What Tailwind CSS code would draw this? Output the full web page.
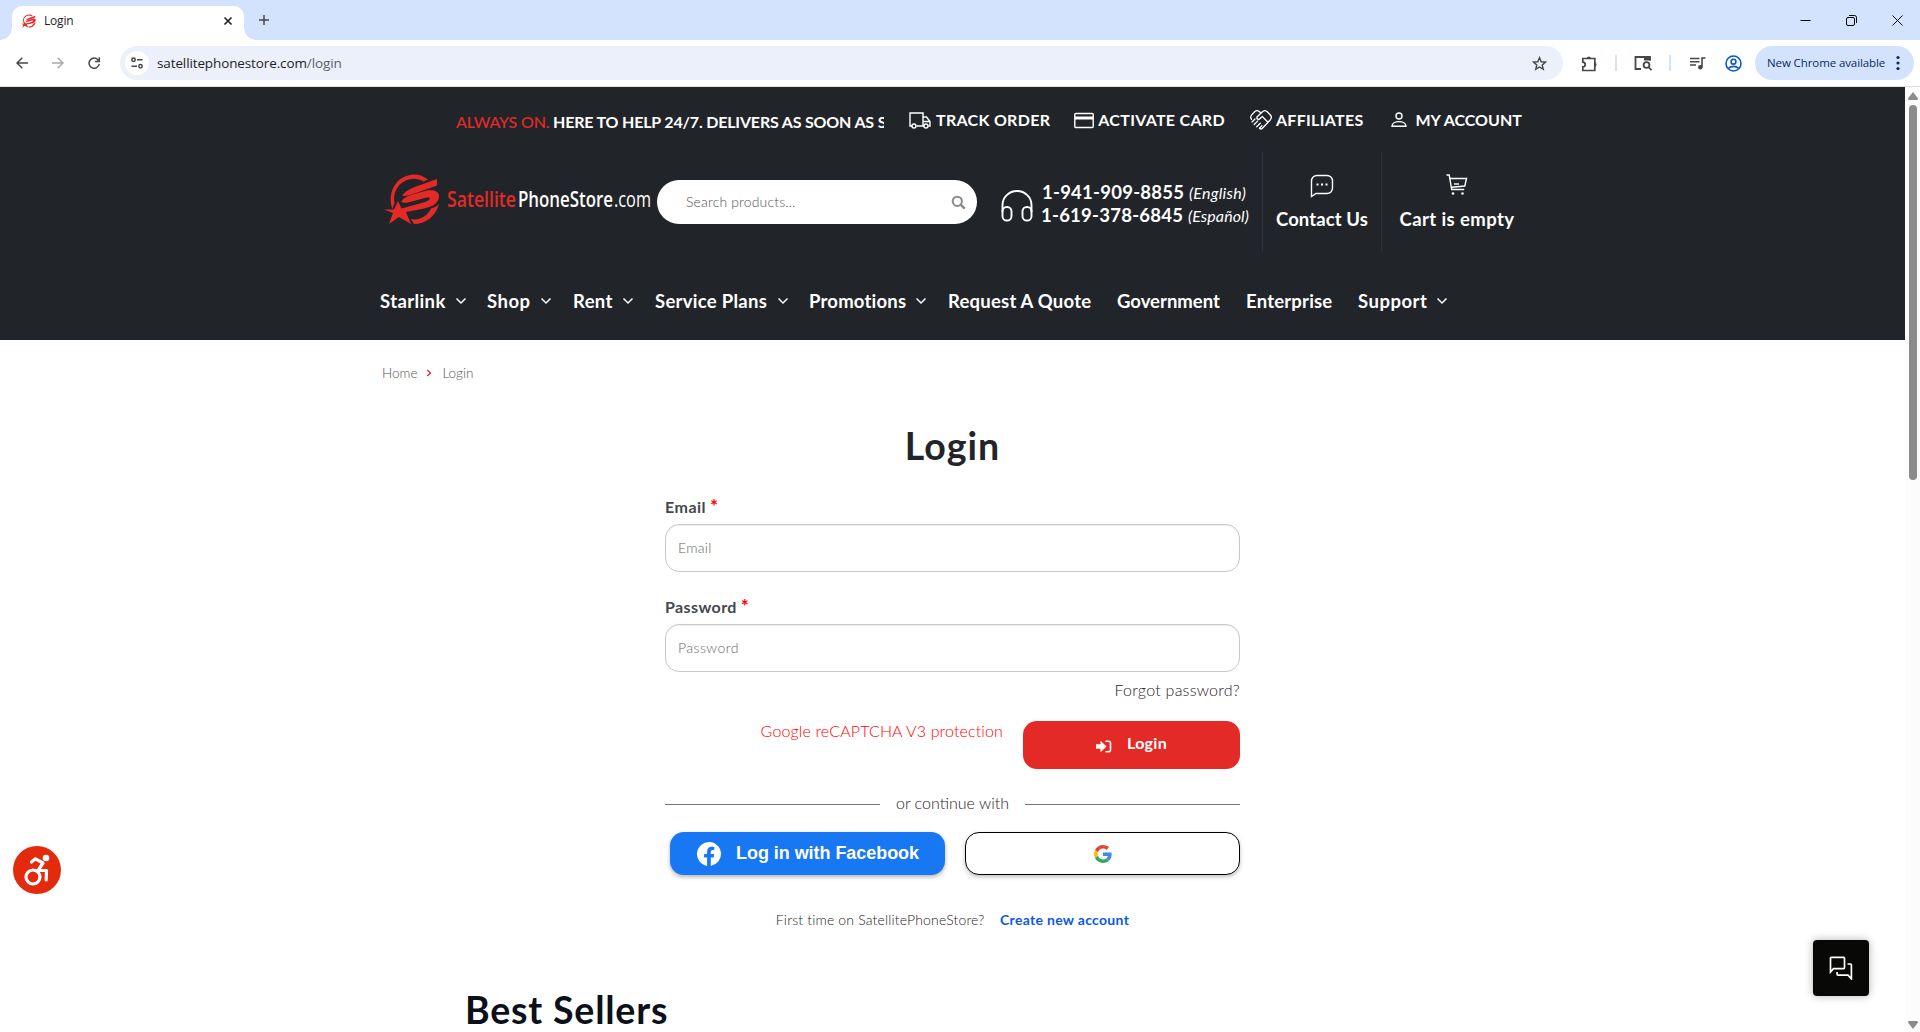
<!DOCTYPE html>
<html lang="en">
<head>
  <meta charset="UTF-8" />
  <meta name="viewport" content="width=device-width, initial-scale=1.0" />
  <title>Login</title>
  <script src="https://cdn.jsdelivr.net/npm/@tailwindcss/browser@4"></script>
</head>
<body class="w-[1920px] h-[1032px] overflow-hidden flex flex-col bg-white font-['Lato','Open_Sans',sans-serif]">

<!-- Shared symbols -->
<svg class="hidden">
  <symbol id="mark" viewBox="0 0 56 50">
    <path d="M8.500 35C4 24 8 10 18 4c9-5.500 19-4.500 26 1.500l-4.500 2C33 3.500 26 4 20 7.500 12 12 9 21 10.500 29z" />
    <path d="M18 22c3-5 9-7.500 14-9.500L53 5v6.500L32 19c-5 1.700-9 3.500-14 3z" />
    <path d="M17 28c3-5 8-6.500 13-8l13-3.500c6-1.200 12 .5 12 5.500 0 8-8 11-15 12.500L22 38l5 12-12-7-10 7 4-11-9-3.500h10L14 27l3.500 7.500 22-6c3-.9 6-2.300 6.500-4-.8-1.600-4-.8-7 0l-14 3.700c-3 .7-5 1-8-.2z" />
    <path d="M55 30c-3 12-13 20-25 20l-3-5c8 1.800 16-2.500 20-10.500 2.500-.8 5.500-2 8-4.500z" />
  </symbol>
  <symbol id="chev" viewBox="0 0 12 8"><path d="M1.500 1.500 6 6l4.500-4.500" fill="none" stroke="#fff" stroke-width="1.500" /></symbol>
</svg>

<!-- Tab strip -->
<div class="h-10 shrink-0 bg-[#d3e3fd] flex items-end font-['Open_Sans','Noto_Sans',sans-serif]">
  <div class="relative ml-3 w-[232px] h-[34px] bg-white rounded-t-[10px] flex items-center pl-[9px] pb-[4px]">
    <div class="absolute -left-3 bottom-0 w-3 h-3 bg-[radial-gradient(circle_at_0_0,#d3e3fd_11.5px,#fff_12px)]"></div>
    <div class="absolute -right-3 bottom-0 w-3 h-3 bg-[radial-gradient(circle_at_100%_0,#d3e3fd_11.5px,#fff_12px)]"></div>
    <svg class="w-[15px] h-[14px] fill-[#e42a27]"><use href="#mark" /></svg>
    <span class="ml-2 text-[12px] tracking-[-0.2px] text-[#1f1f1f]">Login</span>
    <svg class="ml-auto mr-[11px] w-[10px] h-[10px]" viewBox="0 0 10 10"><path d="M1.500 1.500l7 7m0-7l-7 7" stroke="#1f1f1f" stroke-width="1.600" /></svg>
  </div>
  <svg class="ml-[14px] mb-[14px] w-3 h-3" viewBox="0 0 12 12"><path d="M6 1v10M1 6h10" stroke="#474747" stroke-width="1.500" /></svg>
  <div class="ml-auto mr-[17px] mb-[14px] flex items-center gap-[35px]">
    <svg class="w-[11px] h-[11px]" viewBox="0 0 11 11"><path d="M.5 5.500h10" stroke="#000" /></svg>
    <svg class="w-[11px] h-[11px]" viewBox="0 0 11 11" fill="none" stroke="#000"><rect x=".5" y="2.500" width="8" height="8" rx="1.500" /><path d="M3 .5h5.500a2 2 0 0 1 2 2V8" /></svg>
    <svg class="w-[11px] h-[11px]" viewBox="0 0 11 11"><path d="M.5.5l10 10m0-10l-10 10" stroke="#000" /></svg>
  </div>
</div>

<!-- Toolbar -->
<div class="h-[47px] shrink-0 border-b border-[#dcdfe5] flex items-center font-['Open_Sans','Noto_Sans',sans-serif]">
  <svg class="ml-4 w-3 h-3" viewBox="0 0 12 12" fill="none" stroke="#474747" stroke-width="1.500"><path d="M12 6H1M6.300.8 1 6l5.300 5.200" /></svg>
  <svg class="ml-6 w-3 h-3" viewBox="0 0 12 12" fill="none" stroke="#a9a9a9" stroke-width="1.500"><path d="M0 6h11M5.700.8 11 6l-5.300 5.200" /></svg>
  <svg class="ml-6 w-3 h-3" viewBox="0 0 12 12" fill="none" stroke="#474747" stroke-width="1.500"><path d="M10.300 3.200A5.100 5.100 0 1 0 11.200 7M11.300.3v4.200H7.100" /></svg>
  <div class="ml-5 w-[1443px] h-[34px] rounded-full bg-[#ecf0fa] flex items-center pl-[5px] pr-4">
    <div class="w-6 h-6 rounded-full bg-white flex items-center justify-center">
      <svg class="w-3 h-3" viewBox="0 0 12 12" fill="none" stroke="#474747" stroke-width="1.500"><circle cx="2.500" cy="2.700" r="1.700" /><path d="M6 2.700h5.500M.5 9.300H6" /><circle cx="9.500" cy="9.300" r="1.700" /></svg>
    </div>
    <p class="ml-2 text-[13.5px] tracking-[-0.12px] text-[#1f1f1f]">satellitephonestore.com<span class="text-[#5b6068]">/login</span></p>
    <svg class="ml-auto w-[15px] h-[15px]" viewBox="0 0 16 16" fill="none" stroke="#474747" stroke-width="1.500"><path d="M8 1.800l1.800 4.300 4.600.4-3.500 3 1.100 4.600L8 11.700l-4 2.400 1.100-4.600-3.500-3 4.600-.4z" /></svg>
  </div>
  <svg class="ml-[18px] w-[17px] h-[17px]" viewBox="0 0 17 17" fill="none" stroke="#474747" stroke-width="1.700"><path d="M1.800 3.500h12v12h-12v-3.600a2.400 2.400 0 0 0 0-4.800z" /><path d="M6 3.200a2 2 0 0 1 3.600 0zM14 7.700a2 2 0 0 1 0 3.600z" fill="#474747" stroke-width="1" /></svg>
  <div class="ml-[17px] w-[2px] h-4 bg-[#d3e3fd]"></div>
  <svg class="ml-[17px] w-[18px] h-[16px]" viewBox="0 0 18 16" fill="none" stroke="#474747" stroke-width="1.800"><path d="M7 14H1.500V2H16v3.500" /><path d="M10 1.500h6.500v4H10z" fill="#474747" stroke="none" /><circle cx="12.500" cy="10" r="2.900" /><path d="M14.500 12l3 3.200" /></svg>
  <div class="ml-[17px] w-[2px] h-4 bg-[#d3e3fd]"></div>
  <svg class="ml-[19px] w-[16px] h-[14px]" viewBox="0 0 16 14" fill="none" stroke="#474747" stroke-width="1.600"><path d="M0 2.500h9.500M0 5.800h9.500M0 9h6M12 11.300V2h3.500" /><circle cx="10.300" cy="11.200" r="2.200" fill="#474747" stroke="none" /></svg>
  <svg class="ml-[19px] w-[17px] h-[17px]" viewBox="0 0 17 17" fill="none" stroke="#0b57d0" stroke-width="1.600"><circle cx="8.500" cy="8.500" r="7.500" /><circle cx="8.500" cy="6.700" r="2.400" /><path d="M3.300 13.500c2.800-2.800 7.600-2.800 10.400 0" /></svg>
  <div class="ml-[13px] w-[159px] h-[34px] rounded-full bg-[#d3e3fd] flex items-center pl-3 text-[11.5px] tracking-[-0.1px] text-[#0a2a66]">
    <span>New Chrome available</span>
    <svg class="ml-auto mr-[14px] w-1 h-4 fill-[#0a2a66]" viewBox="0 0 4 16"><circle cx="2" cy="2.500" r="1.600" /><circle cx="2" cy="8" r="1.600" /><circle cx="2" cy="13.500" r="1.600" /></svg>
  </div>
</div>

<div class="flex h-[945px]">
  <div class="w-[1905px] overflow-hidden">

    <!-- Site header -->
    <header class="h-[253px] bg-[#212529] text-white">
      <div class="h-[65px] pl-[456px] flex items-center whitespace-nowrap text-[16px] font-bold">
        <div class="w-[428px] mt-[5px] overflow-hidden tracking-[-0.18px]"><span class="font-medium text-[#e42a27]">ALWAYS ON.</span> HERE TO HELP 24/7. DELIVERS AS SOON AS SAME DAY</div>
        <svg class="ml-[25px] mt-[1px] w-[22px] h-[17px]" viewBox="0 0 22 17" fill="none" stroke="#fff" stroke-width="1.400"><path d="M3 14H1V1h13v13H7.500M14 5h3.500l3.500 4.500V14h-1.500M14 14h1M14.500 9.500H21" /><circle cx="5" cy="14" r="2" /><circle cx="17" cy="14" r="2" /></svg>
        <span class="ml-[5px] mt-[1px] tracking-[0.3px]">TRACK ORDER</span>
        <svg class="ml-6 mt-[1px] w-5 h-[17px]" viewBox="0 0 20 17" fill="none" stroke="#fff" stroke-width="1.400"><rect x=".8" y="1.500" width="18.400" height="14" rx="1" /><path d="M1 6h18" stroke-width="3" /></svg>
        <span class="ml-1 mt-[1px] tracking-[0.3px]">ACTIVATE CARD</span>
        <svg class="ml-[25px] mt-[1px] w-[22px] h-5" viewBox="0 0 22 20" fill="none" stroke="#fff" stroke-width="1.300" stroke-linecap="round" stroke-linejoin="round"><path d="M11 3 9.500 1.700C8 .4 6 .4 4.600 1.800L1.700 4.900C.5 6.400.5 8 1.500 9.300M11 3l1.500-1.300c1.500-1.300 3.300-1.300 4.700 0l3.200 3.300c1.200 1.400 1.200 3.200 0 4.700l-8 8.600c-.9.900-2 .9-2.900 0" /><path d="M11 3 6.800 7.300c-.3 1.700 1.400 2.600 2.800 1.600l2.700-2.400 5.200 5.300M2 12l3-3M4.200 14.500l3.600-3.600M6.700 16.800l3.600-3.600M9.500 18.300l2.500-2.500" /></svg>
        <span class="ml-1 mt-[1px] tracking-[0.3px]">AFFILIATES</span>
        <svg class="ml-[27px] w-4 h-4" viewBox="0 0 16 16" fill="none" stroke="#fff" stroke-width="1.400"><circle cx="8" cy="4" r="3" /><path d="M1 14.300c0-6.200 14-6.200 14 0z" /></svg>
        <span class="ml-[9px] mt-[1px]">MY ACCOUNT</span>
      </div>

      <div class="h-[100px] pl-[384px] flex items-center whitespace-nowrap">
        <svg class="w-[56px] h-[50px] -mt-[6px] fill-[#e42a27]"><use href="#mark" /></svg>
        <svg class="ml-[6px] w-[208px] h-[30px] -mt-[4px] font-['Open_Sans',sans-serif]" viewBox="0 0 208 30">
          <text x="1" y="22" font-size="22" font-weight="600" fill="#e42a27" textLength="69" lengthAdjust="spacingAndGlyphs">Satellite</text>
          <text x="72" y="22" font-size="22" font-weight="600" fill="#fff" textLength="95" lengthAdjust="spacingAndGlyphs">PhoneStore</text>
          <text x="168" y="22" font-size="22" fill="#fff" textLength="37" lengthAdjust="spacingAndGlyphs">.com</text>
        </svg>
        <div class="ml-[3px] w-[320px] h-11 rounded-[22px] bg-white flex items-center pl-[29px] pr-[11px]">
          <span class="mb-[1px] text-[14px] tracking-[0.15px] font-light text-[#555]">Search products...</span>
          <svg class="ml-auto w-[15px] h-[15px]" viewBox="0 0 15 15" fill="none" stroke="#8a8a8a" stroke-width="2"><circle cx="6.300" cy="6.300" r="4.600" /><path d="M9.700 9.700l4 4" stroke-width="2.500" /></svg>
        </div>
        <svg class="ml-[24px] mt-[7px] w-[32px] h-[32px]" viewBox="0 0 32 32" fill="none" stroke="#fff" stroke-width="1.900"><path d="M1.500 22v-7a14.500 14 0 0 1 29 0v7" /><rect x="1.500" y="17" width="9" height="13.500" rx="4.300" /><rect x="21.500" y="17" width="9" height="13.500" rx="4.300" /></svg>
        <div class="ml-[8px] w-[221px] mt-[4px] text-[18.5px] tracking-[0.25px] leading-[23px] font-bold">
          <p class="pl-[1px]">1-941-909-8855 <i class="text-[16px] font-normal">(English)</i></p>
          <p>1-619-378-6845 <i class="text-[16px] tracking-[0.1px] font-normal">(Español)</i></p>
        </div>
        <div class="h-[100px] w-[119px] border-l border-[#30343a] flex flex-col items-center pt-[22px] text-[18.5px] font-bold">
          <svg class="w-[24px] h-[24px]" viewBox="0 0 24 24" fill="none" stroke="#fff" stroke-width="1.400"><path d="M1.500 22.500V7a5.500 5.500 0 0 1 5.500-5.500h10A5.500 5.500 0 0 1 22.500 7v7a5.500 5.500 0 0 1-5.500 5.500H6z" /><path d="M6.500 10.500h2m2.500 0h2m2.500 0h2" stroke-width="2" /></svg>
          <span class="mt-[8px] tracking-[0.1px]">Contact Us</span>
        </div>
        <div class="h-[100px] w-[151px] border-l border-[#30343a] flex flex-col items-center pt-[22px] text-[18.5px] font-bold">
          <svg class="w-[22px] h-[22px]" viewBox="0 0 22 22" fill="none" stroke="#fff" stroke-width="1.400"><path d="M.5 1h2.700l2.500 14.500h12.500M4 4.500h16.500L18.800 12l-13.300 1.200" /><path d="M8 10h5" /><circle cx="7" cy="19.500" r="1.300" fill="#fff" stroke="none" /><circle cx="16.500" cy="19.500" r="1.300" fill="#fff" stroke="none" /></svg>
          <span class="mt-[10px] tracking-[0.4px]">Cart is empty</span>
        </div>
      </div>

      <nav class="h-[88px] pl-[380px] pt-[37px] flex items-start whitespace-nowrap text-[18.5px] leading-6 font-bold">
        <div class="flex items-center w-[107px] gap-[9px] tracking-[0.4px]">Starlink <svg class="w-3 h-2"><use href="#chev" /></svg></div>
        <div class="flex items-center w-[86px] gap-[9px] tracking-[0.5px]">Shop <svg class="w-3 h-2"><use href="#chev" /></svg></div>
        <div class="flex items-center w-[82px] gap-[9px] tracking-[0.35px]">Rent <svg class="w-3 h-2"><use href="#chev" /></svg></div>
        <div class="flex items-center w-[154px] gap-[10px] tracking-[0.28px]">Service Plans <svg class="w-3 h-2"><use href="#chev" /></svg></div>
        <div class="flex items-center w-[139px] gap-[9px] tracking-[0.2px]">Promotions <svg class="w-3 h-2"><use href="#chev" /></svg></div>
        <div class="w-[169px] tracking-[0.22px]">Request A Quote</div>
        <div class="w-[129px]">Government</div>
        <div class="w-[112px] tracking-[0.2px]">Enterprise</div>
        <div class="flex items-center gap-[9px] tracking-[0.5px]">Support <svg class="w-3 h-2"><use href="#chev" /></svg></div>
      </nav>
    </header>

    <!-- Breadcrumb -->
    <div class="h-[66px] pl-[382px] flex items-center text-[13.5px] font-light text-[#555]">
      <span>Home</span>
      <svg class="ml-[9px] w-[6px] h-[8px]" viewBox="0 0 6 8" fill="none" stroke="#e42a27" stroke-width="1.300"><path d="M1.200 1 4.500 4 1.200 7" /></svg>
      <span class="ml-[10px]">Login</span>
    </div>

    <!-- Login form -->
    <main class="ml-[665px] w-[575px] text-[16px] leading-6 text-[#1f2225]">
      <h1 class="pt-[16px] text-center text-[37.5px] tracking-[1px] leading-[48px] font-bold text-[#212529]">Login</h1>
      <label class="mt-[25px] block font-bold text-[#44484d]"><span class="tracking-[0.5px]">Email</span> <span class="text-[19px] leading-none text-[#f00]">*</span></label>
      <div class="mt-[5px] h-12 border border-[#c8c8c8] rounded-[14px] shadow-[inset_0_1px_1px_rgba(0,0,0,.075)] flex items-center px-3 text-[14px] tracking-[0.3px] font-light text-[#666]">Email</div>
      <label class="mt-[23px] block font-bold text-[#44484d]"><span class="tracking-[0.4px]">Password</span> <span class="text-[19px] leading-none text-[#f00]">*</span></label>
      <div class="mt-[5px] h-12 border border-[#c8c8c8] rounded-[14px] shadow-[inset_0_1px_1px_rgba(0,0,0,.075)] flex items-center px-3 pb-[1px] text-[14px] tracking-[0.45px] font-light text-[#666]">Password</div>
      <p class="mt-[6px] text-right font-light tracking-[0.25px]">Forgot password?</p>

      <div class="mt-[19px] flex justify-end">
        <span class="mr-5 -mt-[2px] font-light tracking-[0.14px] text-[#f00]">Google reCAPTCHA V3 protection</span>
        <button class="w-[217px] h-12 rounded-[14px] bg-[#e42a27] text-white font-bold flex items-center justify-center gap-[15px] pb-[4px]">
          <svg class="mt-[6px] w-[16px] h-[13px]" viewBox="0 0 16 13" fill="#fff"><path d="M0 4.300h4.500V.8L10.500 6.500l-6 5.700V8.700H0z" /><path d="M9.500 1.300h3a2 2 0 0 1 2 2v6.400a2 2 0 0 1-2 2h-3" fill="none" stroke="#fff" stroke-width="1.600" /></svg>
          <span class="tracking-[0.3px]">Login</span>
        </button>
      </div>

      <div class="mt-[23px] flex items-center justify-between font-light">
        <div class="w-[215px] h-px bg-[#777]"></div>
        <span class="-mt-[1px] mb-[1px]">or continue with</span>
        <div class="w-[215px] h-px bg-[#777]"></div>
      </div>

      <div class="mt-4 pl-[5px] flex justify-between">
        <button class="w-[275px] h-[43px] rounded-[14px] bg-[#1877f2] text-white shadow-[0_2px_4px_rgba(0,0,0,.3)] flex items-center pl-[27px] pb-[2px] font-['Liberation_Sans',sans-serif] text-[18px] font-bold">
          <svg class="w-6 h-6 mt-[2px]" viewBox="0 0 24 24" fill="#fff"><path d="M24 12a12 12 0 1 0-13.900 11.900v-8.400H7.100V12h3V9.400c0-3 1.800-4.700 4.500-4.700 1.300 0 2.700.2 2.700.2v3h-1.500c-1.500 0-2 .9-2 1.900V12h3.400l-.5 3.500h-2.900v8.400A12 12 0 0 0 24 12z" /></svg>
          <span class="ml-[15px] tracking-[-0.05px]">Log in with Facebook</span>
        </button>
        <button class="w-[275px] h-[43px] rounded-[14px] border border-black bg-white shadow-[0_2px_4px_rgba(0,0,0,.25)] flex items-center justify-center">
          <svg class="w-[18px] h-[18px]" viewBox="0 0 48 48"><path fill="#EA4335" d="M24 9.500c3.540 0 6.710 1.220 9.210 3.600l6.850-6.850C35.900 2.380 30.470 0 24 0 14.620 0 6.510 5.380 2.560 13.220l7.980 6.190C12.430 13.720 17.740 9.500 24 9.500z" /><path fill="#4285F4" d="M46.980 24.550c0-1.570-.15-3.090-.38-4.550H24v9.020h12.940c-.58 2.960-2.260 5.480-4.780 7.180l7.730 6c4.510-4.180 7.090-10.360 7.090-17.650z" /><path fill="#FBBC05" d="M10.530 28.590c-.48-1.450-.76-2.990-.76-4.590s.27-3.140.76-4.590l-7.980-6.190C.92 16.460 0 20.120 0 24c0 3.880.92 7.540 2.560 10.780l7.970-6.190z" /><path fill="#34A853" d="M24 48c6.480 0 11.930-2.130 15.890-5.810l-7.730-6c-2.150 1.450-4.920 2.300-8.160 2.300-6.260 0-11.570-4.220-13.470-9.910l-7.980 6.190C6.510 42.620 14.620 48 24 48z" /></svg>
        </button>
      </div>

      <p class="mt-[33px] text-center text-[14px] leading-6"><span class="font-light tracking-[0.17px]">First time on SatellitePhoneStore?</span> <a class="ml-3 font-bold tracking-[0.3px] text-[#0a58e8]">Create new account</a></p>
    </main>

    <h2 class="mt-[53px] ml-[465px] text-[37.5px] tracking-[0.8px] leading-[50px] font-bold text-[#0c1018]">Best Sellers</h2>
  </div>

  <!-- Scrollbar -->
  <div class="w-[15px] bg-[#fcfcfc] flex flex-col items-center pt-[5px] pb-[3px]">
    <svg class="w-[10px] h-[8px] fill-[#8b8b8b]" viewBox="0 0 10 8"><path d="M5 0l5 6.500Q10 8 9 8H1Q0 8 0 6.500z" /></svg>
    <div class="mt-[5px] w-2 h-[375px] rounded-full bg-[#8b8b8b]"></div>
    <svg class="mt-auto w-[10px] h-[8px] fill-[#8b8b8b]" viewBox="0 0 10 8"><path d="M5 8l5-6.500Q10 0 9 0H1Q0 0 0 1.500z" /></svg>
  </div>
</div>

<!-- Accessibility button -->
<div class="absolute left-[13px] top-[846px] w-12 h-12 rounded-full bg-[#e42a0c]">
  <svg class="w-12 h-12" viewBox="0 0 48 48" fill="none" stroke="#fff" stroke-width="3.200"><circle cx="33" cy="12" r="3.300" fill="#fff" stroke="none" /><circle cx="20" cy="31" r="7" /><path d="M18.500 16l4-3.200 7.500 4.200-5 7.500h8.500l-.3 9.500" stroke-linejoin="round" stroke-linecap="round" /></svg>
</div>

<!-- Chat button -->
<div class="absolute left-[1813px] top-[940px] w-14 h-14 rounded bg-[#080806] shadow-[0_0_8px_rgba(0,0,0,.3)] flex items-center justify-center">
  <svg class="w-6 h-6" viewBox="0 0 24 24" fill="none" stroke="#fff" stroke-width="1.700"><path d="M1.500 16V2.200q0-.9.900-.9h12.200q.9 0 .9.900v9.600q0 .9-.9.900H4.500z" /><path d="M18.500 8h3q.9 0 .9.900v14l-3.400-3.700H9q-.9 0-.9-.9V16" /></svg>
</div>

</body>
</html>
